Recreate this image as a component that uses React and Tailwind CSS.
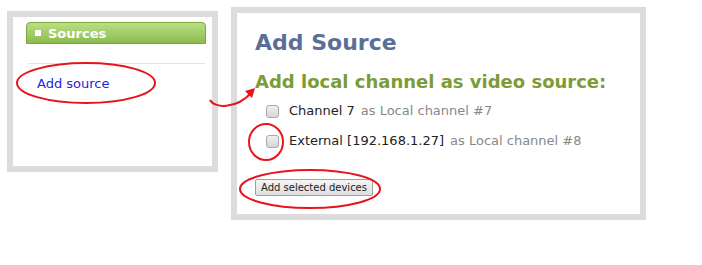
import React from "react";

const Checkbox = () => (
  <span className="inline-block w-[13px] h-[13px] rounded-[3px] border border-[#a9a9a9] bg-gradient-to-b from-[#f0f0f0] to-[#d6d6d6]" />
);

const Annotations = () => (
  <svg className="absolute left-0 top-0 pointer-events-none" width="702" height="265" viewBox="0 0 702 265">
    <g fill="none" stroke="#e8141b" strokeWidth="2">
      <ellipse cx="86" cy="83" rx="69" ry="20" />
      <ellipse cx="266" cy="142" rx="17" ry="18" />
      <ellipse cx="310" cy="189" rx="70" ry="19" />
      <path d="M210 100 C 214 108, 236 110, 252 92" />
    </g>
    <path d="M255 88 L 245 91 L 252 98 Z" fill="#e8141b" />
  </svg>
);

export default function App() {
  return (
    <div className="relative w-[702px] h-[265px] bg-white font-['DejaVu_Sans',sans-serif]">
      <div className="flex items-start">
        {/* Sidebar */}
        <div className="ml-[7px] mt-[11px] w-[211px] h-[161px] border-[6px] border-[#dcdcdc] pt-[5px] pl-[13px] pr-[7px]">
          <div className="flex items-center h-[22px] w-[180px] rounded-t-[4px] border border-[#7fa63c] bg-gradient-to-b from-[#b9df83] to-[#8cbb4d] pl-[8px]">
            <span className="w-[6px] h-[6px] bg-white mr-[7px]" />
            <span className="text-white font-bold text-[13px] leading-none">Sources</span>
          </div>
          <div className="mt-[19px] ml-[2px] border-t border-[#e4e4e4]" />
          <div className="mt-[12px] pl-[11px] text-[13px] text-[#2323e0] leading-[16px]">Add source</div>
        </div>

        {/* Main */}
        <div className="ml-[13px] mt-[7px] w-[415px] h-[213px] border-[6px] border-[#dcdcdc] pl-[18px] pt-[17px]">
          <h1 className="text-[22px] font-bold text-[#5a6e98] leading-[26px]">Add Source</h1>
          <h2 className="mt-[15px] text-[18px] font-bold text-[#7b9c37] leading-[22px]">
            Add local channel as video source:
          </h2>
          <div className="mt-[11px] ml-[11px] flex flex-col gap-[16px] text-[13px] leading-[14px]">
            <div className="flex items-center">
              <Checkbox />
              <span className="ml-[10px] text-[#222]">Channel 7</span>
              <span className="ml-[6px] text-[#888]">as Local channel #7</span>
            </div>
            <div className="flex items-center">
              <Checkbox />
              <span className="ml-[10px] text-[#222]">External [192.168.1.27]</span>
              <span className="ml-[6px] text-[#888]">as Local channel #8</span>
            </div>
          </div>
          <button className="block mt-[31px] h-[17px] px-[5px] border border-[#a0a0a0] rounded-[2px] bg-gradient-to-b from-[#f6f6f6] to-[#dedede] text-[10px] leading-none text-[#222]">
            Add selected devices
          </button>
        </div>
      </div>
      <Annotations />
    </div>
  );
}
